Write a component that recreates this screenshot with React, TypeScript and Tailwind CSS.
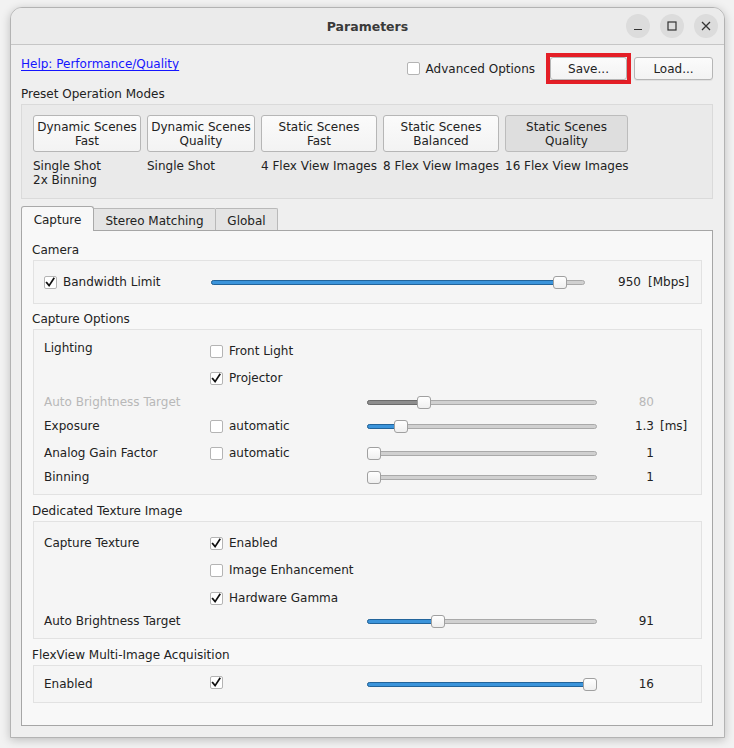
import React from "react";

function Check({ checked }: { checked?: boolean }) {
  return (
    <span className="relative inline-block w-[13px] h-[13px] shrink-0 bg-white border border-[#b4b4b4] rounded-[2px]">
      {checked && (
        <svg className="absolute left-0 top-0" width="11" height="11" viewBox="0 0 11 11">
          <path d="M1.6 5.6 L4.1 8.6 L8.8 1.4" fill="none" stroke="#111" strokeWidth="1.7" strokeLinecap="square" strokeLinejoin="miter" />
        </svg>
      )}
    </span>
  );
}

function Slider({ width, pos, disabled }: { width: string; pos: number; disabled?: boolean }) {
  return (
    <div className={"relative h-[13px] " + width}>
      <div className="absolute left-0 right-0 top-[4px] h-[5px] rounded-full bg-[#d0d0d0] border border-[#a9a9a9]" />
      {pos > 0 && (
        <div
          className={
            "absolute left-0 top-[4px] h-[5px] rounded-l-full border " +
            (disabled ? "bg-[#8d8d8d] border-[#6b6b6b]" : "bg-[#3b94db] border-[#22649b]")
          }
          style={{ width: pos + 7 }}
        />
      )}
      <div
        className="absolute top-0 h-[13px] w-[14px] rounded-[3px] border border-[#a0a0a0] bg-gradient-to-b from-white to-[#efefef]"
        style={{ left: pos }}
      />
    </div>
  );
}

function Btn({ children, className }: { children: React.ReactNode; className?: string }) {
  return (
    <div
      className={
        "flex items-center justify-center pt-px border border-[#b6b6b6] rounded-[3px] bg-gradient-to-b from-[#fbfbfb] to-[#f3f3f3] shadow-[0_1px_0_rgba(0,0,0,0.06)] " +
        (className || "")
      }
    >
      {children}
    </div>
  );
}

function CheckLabel({ checked, label }: { checked?: boolean; label?: string }) {
  return (
    <div className="flex items-center gap-[6px]">
      <Check checked={checked} />
      {label && <span>{label}</span>}
    </div>
  );
}

function Row({
  label,
  labelClass,
  check,
  slider,
  value,
  unit,
  valueClass,
  className,
}: {
  label?: string;
  labelClass?: string;
  check?: React.ReactNode;
  slider?: React.ReactNode;
  value?: string;
  unit?: string;
  valueClass?: string;
  className?: string;
}) {
  return (
    <div className={"flex items-center " + (className || "h-[24px]")}>
      <div className={"w-[166px] shrink-0 " + (labelClass || "")}>{label}</div>
      <div className="w-[157px] shrink-0">{check}</div>
      <div className="w-[230px] shrink-0">{slider}</div>
      <div className={"w-[57px] shrink-0 text-right " + (valueClass || "")}>{value}</div>
      {unit && <div className="ml-[6px]">{unit}</div>}
    </div>
  );
}

const presets = [
  { w: "w-[108px]", l1: "Dynamic Scenes", l2: "Fast", d1: "Single Shot", d2: "2x Binning" },
  { w: "w-[108px]", l1: "Dynamic Scenes", l2: "Quality", d1: "Single Shot" },
  { w: "w-[116px]", l1: "Static Scenes", l2: "Fast", d1: "4 Flex View Images" },
  { w: "w-[116px]", l1: "Static Scenes", l2: "Balanced", d1: "8 Flex View Images" },
  { w: "w-[123px]", l1: "Static Scenes", l2: "Quality", d1: "16 Flex View Images", pressed: true },
];

export default function App() {
  return (
    <div className="w-[734px] h-[748px] bg-[#f2f2f2] pt-[7px] pl-[10px] font-['DejaVu_Sans',sans-serif] text-[12px] leading-[14px] text-[#222]">
      <div className="w-[715px] h-[731px] flex flex-col bg-[#efefef] border border-[#b3b3b3] rounded-t-[12px] overflow-hidden shadow-[0_2px_10px_rgba(0,0,0,0.22)]">
        {/* Title bar */}
        <div className="relative h-[37px] shrink-0 flex items-center justify-end pr-[6px] gap-[10px] bg-[#ebebeb] border-b border-[#c6c6c6]">
          <div className="absolute inset-0 pt-px flex items-center justify-center font-bold text-[12.5px] text-[#3a3a3a]">Parameters</div>
          <div className="relative w-[24px] h-[24px] rounded-full bg-[#dcdcdc] flex items-center justify-center">
            <svg width="10" height="10" viewBox="0 0 10 10">
              <path d="M1 8.5 H9" stroke="#333" strokeWidth="1.2" />
            </svg>
          </div>
          <div className="relative w-[24px] h-[24px] rounded-full bg-[#dcdcdc] flex items-center justify-center">
            <svg width="10" height="10" viewBox="0 0 10 10">
              <rect x="1" y="1" width="8" height="8" fill="none" stroke="#333" strokeWidth="1.2" />
            </svg>
          </div>
          <div className="relative w-[24px] h-[24px] rounded-full bg-[#dcdcdc] flex items-center justify-center">
            <svg width="10" height="10" viewBox="0 0 10 10">
              <path d="M1 1 L9 9 M9 1 L1 9" stroke="#333" strokeWidth="1.3" />
            </svg>
          </div>
        </div>

        {/* Body */}
        <div className="flex-1 flex flex-col pl-[10px] pr-[11px] pb-[11px]">
          <div className="mt-[8px] h-[31px] flex items-center">
            <span className="self-start mt-[4px] text-[#1515ff] underline underline-offset-2">Help: Performance/Quality</span>
            <div className="ml-auto flex items-center">
              <div className="flex items-center gap-[6px]">
                <Check />
                <span className="pt-px">Advanced Options</span>
              </div>
              <div className="ml-[11px] w-[85px] h-[31px] border-4 border-[#e41e26] flex">
                <Btn className="flex-1">Save...</Btn>
              </div>
              <Btn className="ml-[3px] w-[79px] h-[23px]">Load...</Btn>
            </div>
          </div>

          <div className="mt-[3px] h-[14px]">Preset Operation Modes</div>

          <div className="mt-[3px] h-[95px] border border-[#dadada] bg-[#eaeaea] pl-[11px] pt-[10px] flex gap-[6px]">
            {presets.map((p, i) => (
              <div key={i} className={"flex flex-col " + p.w}>
                <div
                  className={
                    "h-[37px] flex flex-col items-center justify-center border rounded-[3px] " +
                    (p.pressed
                      ? "bg-[#dedede] border-[#bcbcbc]"
                      : "bg-gradient-to-b from-[#fbfbfb] to-[#f3f3f3] border-[#b6b6b6]")
                  }
                >
                  <span>{p.l1}</span>
                  <span>{p.l2}</span>
                </div>
                <div className="mt-[7px] whitespace-nowrap">{p.d1}</div>
                {p.d2 && <div className="whitespace-nowrap">{p.d2}</div>}
              </div>
            ))}
          </div>

          {/* Tabs */}
          <div className="mt-[7px] h-[24px] flex items-end">
            <div className="relative z-10 -mb-px w-[73px] h-[25px] pt-px flex items-center justify-center bg-[#f8f8f8] border border-b-0 border-[#a9a9a9] rounded-t-[3px]">
              Capture
            </div>
            <div className="w-[122px] h-[22px] pt-[2px] flex items-center justify-center bg-[#e4e4e4] border border-b-0 border-l-0 border-[#b9b9b9] rounded-tr-[2px]">
              Stereo Matching
            </div>
            <div className="w-[62px] h-[22px] pt-[2px] flex items-center justify-center bg-[#e4e4e4] border border-b-0 border-l-0 border-[#b9b9b9] rounded-tr-[2px]">
              Global
            </div>
          </div>

          {/* Pane */}
          <div className="flex-1 flex flex-col border border-[#a6a6a6] bg-[#f8f8f8] px-[10px] pt-[12px]">
            <div className="h-[14px]">Camera</div>
            <div className="mt-[3px] ml-px h-[44px] border border-[#e2e2e2] bg-[#f5f5f5] pl-[10px] pt-[9px]">
              <div className="h-[24px] flex items-center">
                <div className="w-[167px] shrink-0">
                  <CheckLabel checked label="Bandwidth Limit" />
                </div>
                <Slider width="w-[374px]" pos={342} />
                <div className="w-[56px] text-right">950</div>
                <div className="ml-[7px]">[Mbps]</div>
              </div>
            </div>

            <div className="mt-[8px] h-[14px]">Capture Options</div>
            <div className="mt-[3px] ml-px h-[166px] border border-[#e2e2e2] bg-[#f5f5f5] pl-[10px] pt-[9px] flex flex-col">
              <div className="h-[24px] flex">
                <div className="w-[166px] shrink-0 mt-[2px]">Lighting</div>
                <div className="flex items-center">
                  <CheckLabel label="Front Light" />
                </div>
              </div>
              <Row className="h-[24px] mt-[3px]" check={<CheckLabel checked label="Projector" />} />
              <Row
                label="Auto Brightness Target"
                labelClass="text-[#b8b8b8]"
                slider={<Slider width="w-[230px]" pos={50} disabled />}
                value="80"
                valueClass="text-[#b8b8b8]"
              />
              <Row
                label="Exposure"
                check={<CheckLabel label="automatic" />}
                slider={<Slider width="w-[230px]" pos={27} />}
                value="1.3"
                unit="[ms]"
              />
              <Row
                className="h-[24px] mt-[3px]"
                label="Analog Gain Factor"
                check={<CheckLabel label="automatic" />}
                slider={<Slider width="w-[230px]" pos={0} />}
                value="1"
              />
              <Row label="Binning" slider={<Slider width="w-[230px]" pos={0} />} value="1" />
            </div>

            <div className="mt-[9px] h-[14px]">Dedicated Texture Image</div>
            <div className="mt-[3px] ml-px h-[118px] border border-[#e2e2e2] bg-[#f5f5f5] pl-[10px] pt-[9px] flex flex-col">
              <Row label="Capture Texture" check={<CheckLabel checked label="Enabled" />} />
              <Row className="h-[24px] mt-[3px]" check={<CheckLabel label="Image Enhancement" />} />
              <Row className="h-[24px] mt-[4px]" check={<CheckLabel checked label="Hardware Gamma" />} />
              <Row
                className="h-[22px]"
                label="Auto Brightness Target"
                slider={<Slider width="w-[230px]" pos={64} />}
                value="91"
              />
            </div>

            <div className="mt-[9px] h-[14px]">FlexView Multi-Image Acquisition</div>
            <div className="mt-[3px] ml-px h-[38px] border border-[#e2e2e2] bg-[#f5f5f5] pl-[10px] pt-[6px]">
              <Row
                label="Enabled"
                check={<Check checked />}
                slider={<Slider width="w-[230px]" pos={216} />}
                value="16"
              />
            </div>
          </div>
        </div>
      </div>
    </div>
  );
}
